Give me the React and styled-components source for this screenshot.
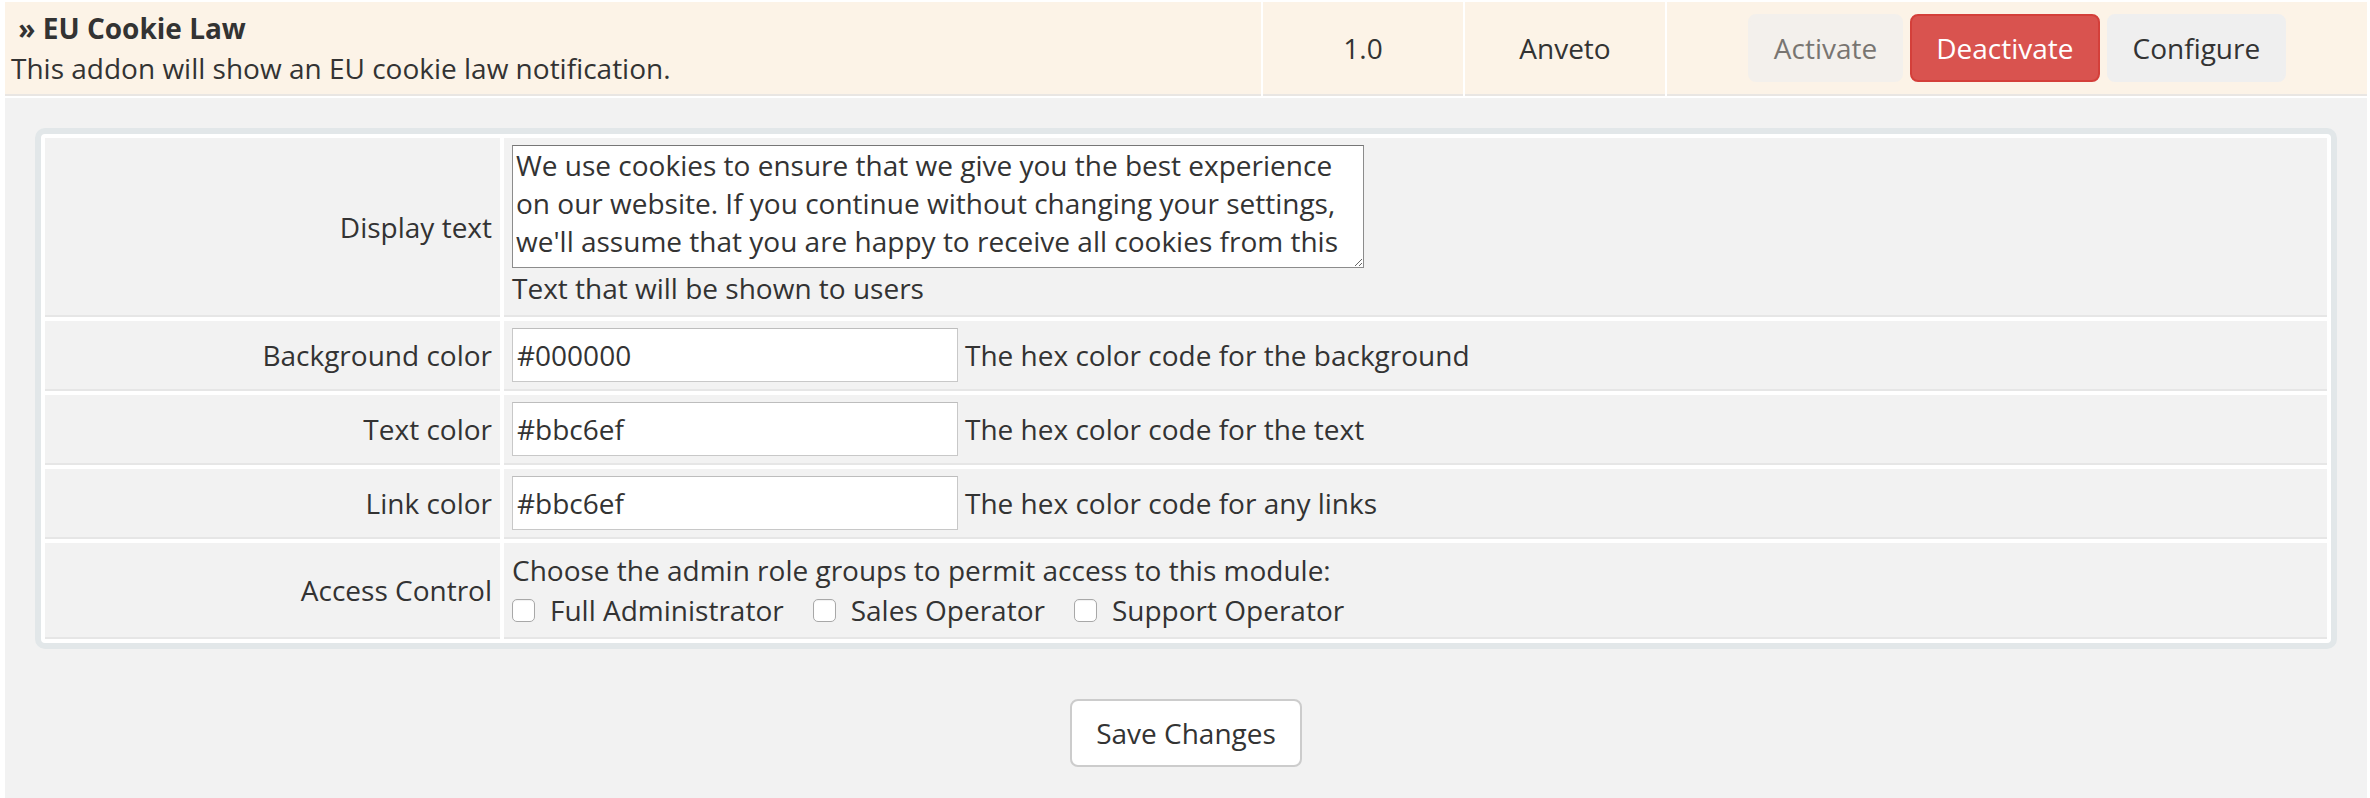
import React from "react";
import styled, { createGlobalStyle } from "styled-components";

const GlobalStyle = createGlobalStyle`
  html, body { margin: 0; padding: 0; background: #ffffff; }
  body {
    font-family: "Open Sans", "Liberation Sans", Arial, sans-serif;
    font-size: 28px;
    line-height: 40px;
    color: #333333;
  }
  * { box-sizing: border-box; }
`;

const Page = styled.div`
  display: flex;
  flex-direction: column;
  gap: 2px;
  padding: 2px 3px 0 5px;
  background: #ffffff;
`;

const ModuleRow = styled.div`
  display: grid;
  grid-template-columns: 1256px 200px 200px 1fr;
  column-gap: 2px;
`;

const Cell = styled.div`
  background: #fcf3e7;
  border-bottom: 2px solid #e9e6e3;
  padding: ${(p) => (p.$stack ? "0 6px" : "12px 6px")};
  display: flex;
  flex-direction: ${(p) => (p.$stack ? "column" : "row")};
  align-items: ${(p) => (p.$stack ? "flex-start" : "center")};
  justify-content: center;
  white-space: nowrap;
`;

const Title = styled.div`
  font-weight: 700;
`;

const Desc = styled.div``;

const ActionGroup = styled.div`
  display: flex;
  gap: 7px;
`;

const Btn = styled.button`
  font: inherit;
  font-size: 28px;
  line-height: 40px;
  padding: 12px 24px;
  border-radius: 8px;
  border: 2px solid ${(p) => (p.$variant === "danger" ? "#d43f3a" : "#efefef")};
  background: ${(p) => (p.$variant === "danger" ? "#d9534f" : "#efefef")};
  color: ${(p) => (p.$variant === "danger" ? "#ffffff" : "#333333")};
  opacity: ${(p) => (p.disabled ? 0.65 : 1)};
  cursor: pointer;
`;

const Panel = styled.div`
  background: #f2f2f2;
  padding: 30px 30px 40px;
  min-height: 700px;
`;

const FormBox = styled.div`
  display: grid;
  grid-template-columns: 455px 1fr;
  gap: 4px;
  padding: 4px;
  background: #ffffff;
  border: 6px solid #e2e7e9;
  border-radius: 10px;
`;

const FieldLabel = styled.div`
  background: #f2f2f2;
  border-bottom: 2px solid #e6e6e6;
  padding: 7px 8px;
  display: flex;
  align-items: center;
  justify-content: flex-end;
  text-align: right;
`;

const FieldValue = styled.div`
  background: #f2f2f2;
  border-bottom: 2px solid #e6e6e6;
  padding: 7px 8px;
`;

const InlineField = styled.div`
  display: flex;
  align-items: center;
  gap: 7px;
`;

const TextArea = styled.textarea`
  display: block;
  width: 852px;
  height: 123px;
  margin: 0;
  padding: 0 3px;
  border: 1px solid #8c8c8c;
  border-top-color: #767676;
  background: #ffffff;
  font-family: inherit;
  font-size: 28px;
  line-height: normal;
  color: #333333;
  overflow: hidden;
  resize: both;
`;

const TextInput = styled.input`
  width: 446px;
  height: 54px;
  margin: 0;
  padding: 0 4px;
  border: 1px solid #c8c8c8;
  border-top-color: #bdbdbd;
  background: #ffffff;
  font-family: inherit;
  font-size: 28px;
  color: #333333;
`;

const CheckRow = styled.div`
  display: flex;
  align-items: center;
  gap: 29px;
`;

const CheckLabel = styled.label`
  display: flex;
  align-items: center;
  gap: 15px;
`;

const CheckBox = styled.input`
  appearance: none;
  -webkit-appearance: none;
  width: 23px;
  height: 23px;
  margin: 0;
  border: 1px solid #a8a8a8;
  border-radius: 5px;
  background: #ffffff;
  box-shadow: inset 0 1px 1px rgba(0, 0, 0, 0.06);
`;

const Footer = styled.div`
  display: flex;
  justify-content: center;
  padding-top: 50px;
`;

const SaveBtn = styled.button`
  font: inherit;
  font-size: 28px;
  line-height: 40px;
  padding: 12px 24px;
  border-radius: 8px;
  border: 2px solid #cccccc;
  background: #ffffff;
  color: #333333;
`;

const cookieText =
  "We use cookies to ensure that we give you the best experience on our website. If you continue without changing your settings, we'll assume that you are happy to receive all cookies from this website. If you would like to change your preferences you may do so by following the instructions here.";

const colorFields = [
  { label: "Background color", value: "#000000", help: "The hex color code for the background" },
  { label: "Text color", value: "#bbc6ef", help: "The hex color code for the text" },
  { label: "Link color", value: "#bbc6ef", help: "The hex color code for any links" },
];

const roles = ["Full Administrator", "Sales Operator", "Support Operator"];

export default function App() {
  return (
    <>
      <GlobalStyle />
      <Page>
        <ModuleRow>
          <Cell $stack>
            <Title>{"\u00a0» EU Cookie Law"}</Title>
            <Desc>This addon will show an EU cookie law notification.</Desc>
          </Cell>
          <Cell>1.0</Cell>
          <Cell>Anveto</Cell>
          <Cell>
            <ActionGroup>
              <Btn disabled>Activate</Btn>
              <Btn $variant="danger">Deactivate</Btn>
              <Btn>Configure</Btn>
            </ActionGroup>
          </Cell>
        </ModuleRow>
        <Panel>
          <FormBox>
            <FieldLabel>Display text</FieldLabel>
            <FieldValue>
              <TextArea defaultValue={cookieText} />
              <div>Text that will be shown to users</div>
            </FieldValue>
            {colorFields.map((f) => (
              <React.Fragment key={f.label}>
                <FieldLabel>{f.label}</FieldLabel>
                <FieldValue>
                  <InlineField>
                    <TextInput type="text" defaultValue={f.value} />
                    <span>{f.help}</span>
                  </InlineField>
                </FieldValue>
              </React.Fragment>
            ))}
            <FieldLabel>Access Control</FieldLabel>
            <FieldValue>
              <div>Choose the admin role groups to permit access to this module:</div>
              <CheckRow>
                {roles.map((r) => (
                  <CheckLabel key={r}>
                    <CheckBox type="checkbox" />
                    <span>{r}</span>
                  </CheckLabel>
                ))}
              </CheckRow>
            </FieldValue>
          </FormBox>
          <Footer>
            <SaveBtn>Save Changes</SaveBtn>
          </Footer>
        </Panel>
      </Page>
    </>
  );
}
